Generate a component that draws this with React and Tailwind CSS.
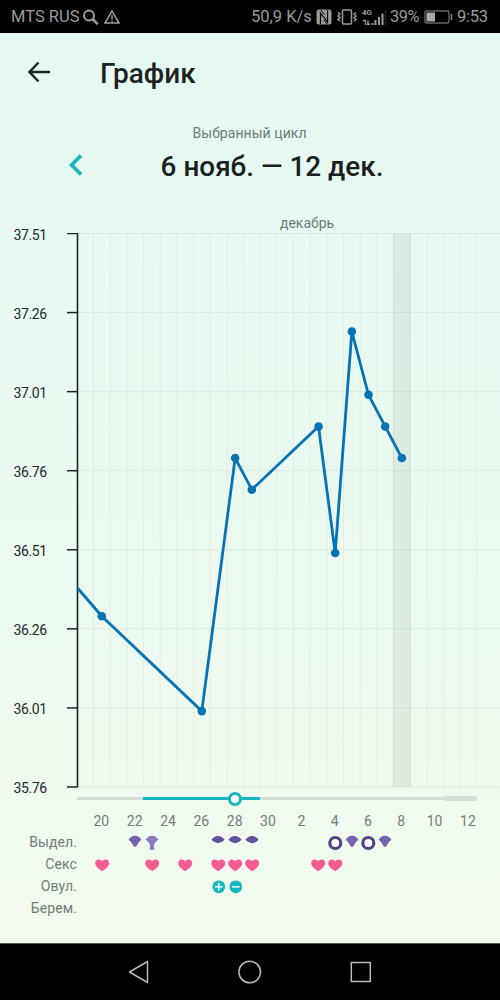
import React from "react";

const DAY = 16.67;
const FIRST_DAY_X = 34.8;
const MAX_TEMP = 37.51;
const PX_PER_DEGREE = 316.3;

const temperatures = [
    { day: 0, value: 36.3 },
    { day: 6, value: 36.0 },
    { day: 8, value: 36.8 },
    { day: 9, value: 36.7 },
    { day: 13, value: 36.9 },
    { day: 14, value: 36.5 },
    { day: 15, value: 37.2 },
    { day: 16, value: 37.0 },
    { day: 17, value: 36.9 },
    { day: 18, value: 36.8 }
];

const yLabels = ["37.51", "37.26", "37.01", "36.76", "36.51", "36.26", "36.01", "35.76"];
const dates = ["20", "22", "24", "26", "28", "30", "2", "4", "6", "8", "10", "12"];

const rows = [
    {
        label: "Выдел.",
        marks: { 2: "fan", 3: "stem", 7: "lens", 8: "lens", 9: "lens", 14: "ring", 15: "fan", 16: "ring", 17: "fan" }
    },
    {
        label: "Секс",
        marks: { 0: "heart", 3: "heart", 5: "heart", 7: "heart", 8: "heart", 9: "heart", 13: "heart", 14: "heart" }
    },
    { label: "Овул.", marks: { 7: "plus", 8: "minus" } },
    { label: "Берем.", marks: {} }
];

const days = Array.from({ length: 23 }, (_, i) => i);

const xOf = (day) => FIRST_DAY_X + day * DAY;
const yOf = (value) => 0.5 + (MAX_TEMP - value) * PX_PER_DEGREE;

const Mark = ({ type }) => (
    <svg width="16" height="22" viewBox="0 0 16 22" className="shrink-0">
        {type === "fan" && (
            <path d="M1.6 7.8Q4 3.8 8 3.8t6.4 4q-2.4 1.6-4.3 5.2Q8 17 5.9 13 4 9.4 1.6 7.8z" fill="#7562ad" />
        )}
        {type === "stem" && (
            <path d="M1.6 7.8Q4 3.8 8 3.8t6.4 4q-2.8 1.5-4 4.2-.8 2.2-.5 4.2l1 1.5H5.1l1-1.500q.3-2-.5-4.200-1.200-2.700-4-4.200z" fill="#8c7dc0" />
        )}
        {type === "lens" && (
            <path d="M1.4 7.8Q4 4 8 4t6.6 3.8Q11.5 11.2 8 11.2T1.4 7.8z" fill="#61509b" />
        )}
        {type === "ring" && <circle cx="8.3" cy="11" r="5.5" fill="#fff" stroke="#514581" strokeWidth="3.2" />}
        {type === "heart" && (
            <path d="M8.2 17.3C4.7 14.9 1.2 12.5 1.2 9.1 1.2 7 2.7 5.5 4.7 5.5c1.5 0 2.8.7 3.5 1.9.7-1.200 2-1.900 3.500-1.900 2 0 3.500 1.500 3.500 3.600 0 3.400-3.500 5.800-7 8.200z" fill="#f25c91" />
        )}
        {(type === "plus" || type === "minus") && (
            <>
                <circle cx="8.8" cy="10.8" r="6.4" fill="#12b7c3" />
                <path d={type === "plus" ? "M5 10.8h7.6M8.8 7v7.6" : "M5 10.8h7.6"} stroke="#fff" strokeWidth="1.5" />
            </>
        )}
    </svg>
);

const StatusBar = () => (
    <div className="flex h-[33px] items-center bg-black pt-px pr-[11px] pl-[11px] text-[16.5px] text-[#9b9b9b]">
        <span className="w-[71px] whitespace-nowrap">MTS RUS</span>
        <svg width="17" height="18" viewBox="0 0 17 18" fill="none" stroke="currentColor" strokeWidth="2">
            <circle cx="7" cy="7.5" r="5" />
            <path d="M10.5 11l5.2 5.2" strokeWidth="2.5" />
        </svg>
        <svg width="16" height="16" viewBox="0 0 16 16" fill="none" stroke="currentColor" strokeWidth="1.5" className="ml-[5px]">
            <path d="M8 2L1 14h14zM8 6v4.5M8 11.5v1.5" />
        </svg>
        <div className="ml-auto flex items-center">
            <span className="w-[65px] whitespace-nowrap">50,9 K/s</span>
            <svg width="16" height="16" viewBox="0 0 16 16">
                <rect x="0.5" y="0.5" width="15" height="15" rx="2.5" fill="#9b9b9b" />
                <path d="M4.5 15V4l7 9V1" fill="none" stroke="#000" strokeWidth="1.2" />
                <path d="M5 1l3.500 4.500M8 11l3 4" fill="none" stroke="#000" strokeWidth="1" />
            </svg>
            <svg width="20" height="16" viewBox="0 0 20 16" fill="none" stroke="currentColor" strokeWidth="1.5" className="ml-[5px]">
                <rect x="5.5" y="1" width="9" height="14" rx="1" />
                <path d="M1 3.5l2 1.5-2 2 2 1.5-2 2 2 1.5M19 3.5L17 5l2 2-2 1.500 2 2-2 1.500" />
            </svg>
            <div className="ml-[5px] flex h-[17px] w-[24px] flex-col">
                <span className="text-[8px] leading-[8px] font-bold">4G</span>
                <svg width="24" height="16" viewBox="0 0 24 16" className="-mt-[7px]">
                    <path d="M1 10.5h2.5v4.5M6 15v-4.500M5 14.3h3" stroke="#9b9b9b" strokeWidth="1.4" fill="none" />
                    <path d="M9.5 13h2v2h-2zM12.5 10h2v5h-2zM16 7h2v8h-2zM19.5 3.5h2V15h-2z" fill="#9b9b9b" />
                    <path d="M23.3 0v15" stroke="#333" />
                </svg>
            </div>
            <span className="ml-[4px] w-[34px] whitespace-nowrap tracking-[-0.5px]">39%</span>
            <svg width="29" height="14" viewBox="0 0 29 14">
                <rect x="1" y="1" width="24" height="12" rx="1.5" fill="none" stroke="#686868" strokeWidth="1.4" />
                <rect x="2.5" y="2.5" width="8.5" height="9" fill="#aaa" />
                <path d="M27.5 4v6" stroke="#888" strokeWidth="1.5" />
            </svg>
            <span className="ml-[4px] w-[32px] whitespace-nowrap tracking-[-0.3px]">9:53</span>
        </div>
    </div>
);

const Chart = () => (
    <div className="flex">
        {/* Temperature scale */}
        <div className="flex h-[556px] w-[67px] flex-col justify-between pt-[2.5px] pl-[13.5px] text-[14px] tracking-[-0.4px] text-[#22292a]">
            {yLabels.map((label) => (
                <div key={label} className="flex h-0 items-center">{label}</div>
            ))}
        </div>

        <svg width="433" height="557" viewBox="0 0 433 557">
            <rect x={xOf(18) - 9} y="0.5" width="18" height="553.5" fill="#000" fillOpacity="0.06" />
            {[...days, 23].map((day) => (
                <path key={day} d={`M${xOf(day) - 8.3} 0.5V554`} stroke="#24463c" strokeOpacity="0.055" />
            ))}
            {yLabels.map((label, i) => (
                <g key={label}>
                    <path d={`M11 ${0.5 + i * 79.07}H433`} stroke="#24463c" strokeOpacity="0.08" />
                    <path d={`M0 ${0.5 + i * 79.07}H10`} stroke="#1c2223" strokeWidth="1.5" />
                </g>
            ))}
            <path d="M10.5 0V554.5" stroke="#1c2223" strokeWidth="1.6" />
            <polyline
                points={`10.5,355 ${temperatures.map((t) => `${xOf(t.day)},${yOf(t.value)}`).join(" ")}`}
                fill="none"
                stroke="#0873b3"
                strokeWidth="2.8"
                strokeLinejoin="round"
            />
            {temperatures.map((t) => (
                <circle key={t.day} cx={xOf(t.day)} cy={yOf(t.value)} r="4.3" fill="#0873b3" />
            ))}
        </svg>
    </div>
);

const App = () => {
    return (
        <div className="flex h-[1000px] w-[500px] flex-col overflow-hidden bg-black font-[Roboto,sans-serif]">
            <StatusBar />

            <main className="h-[910px] bg-linear-to-b from-[#e5f9f2] via-[#eaf9f0] to-[#f2faed]">
                {/* Header */}
                <header className="flex h-[80px] items-center pl-[27px]">
                    <svg width="24" height="24" viewBox="0 0 24 24" fill="none" stroke="#1d2424" strokeWidth="2.5" className="-mt-[2px]">
                        <path d="M11.5 2.500L2.500 12l9 9.500M2.500 12H23" />
                    </svg>
                    <h1 className="mt-px ml-[49px] text-[28px] leading-8 font-medium text-[#1d2323]">График</h1>
                </header>

                {/* Cycle selector */}
                <div className="relative h-[98px] pt-[10px] text-center">
                    <p className="-ml-px text-[14px] leading-5 tracking-[0.06px] text-[#6e7c78]">Выбранный цикл</p>
                    <p className="mt-[8px] ml-[44px] text-[27.9px] leading-8 font-medium text-[#1a2020]">6 нояб. — 12 дек.</p>
                    <svg width="14" height="22" viewBox="0 0 14 22" fill="none" stroke="#17b5be" strokeWidth="3.7" className="absolute top-[41px] left-[69px]">
                        <path d="M12 1.5L2.5 11l9.5 9.500" />
                    </svg>
                </div>

                <p className="h-[22px] pl-[280px] text-[14px] leading-[25px] text-[#6e7c78]">декабрь</p>
                <Chart />

                {/* Fertile window */}
                <div className="flex h-[17px] items-center pl-[77px]">
                    <div className="h-[3px] w-[66px] bg-[#d5dfd8]" />
                    <div className="flex h-[3px] w-[117px] items-center bg-[#17b5be]">
                        <div className="ml-[85px] h-[14px] w-[14px] shrink-0 rounded-full border-[3px] border-[#17b5be] bg-white" />
                    </div>
                    <div className="h-[3px] w-[184px] bg-[#d5dfd8]" />
                    <div className="h-[5px] w-[33px] bg-[#d5dfd8]" />
                </div>

                <div className="mt-[4px] flex h-[21px] items-center pl-[84.7px] text-[14px] text-[#737d79]">
                    {dates.map((date) => (
                        <span key={date} className="w-[33.34px] shrink-0 text-center">{date}</span>
                    ))}
                </div>

                {/* Daily marks */}
                {rows.map((row) => (
                    <div key={row.label} className="flex h-[21.8px] items-center">
                        <span className="mr-[16.5px] w-[77px] text-right text-[14px] tracking-[0.1px] text-[#737d79]">{row.label}</span>
                        {days.map((day) => (
                            <div key={day} className="flex w-[16.67px] shrink-0 justify-center">
                                {row.marks[day] && <Mark type={row.marks[day]} />}
                            </div>
                        ))}
                    </div>
                ))}
            </main>

            {/* Navigation bar */}
            <nav className="flex h-[57px] items-center border-t border-[#505650] pl-[127px]">
                <svg width="246" height="24" viewBox="0 0 246 24" fill="none" stroke="#b9b9b9" strokeWidth="1.5" strokeLinejoin="round">
                    <path d="M20.5 1.5v21L2.5 12z" />
                    <circle cx="122.7" cy="12" r="10.8" />
                    <rect x="224.3" y="2.5" width="19" height="19" />
                </svg>
            </nav>
        </div>
    );
};

export default App;
